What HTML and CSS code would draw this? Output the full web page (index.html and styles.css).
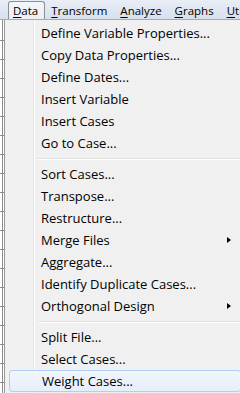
FILE: index.html
```html
<!DOCTYPE html>
<html lang="en">
<head>
    <meta charset="UTF-8">
    <meta name="viewport" content="width=device-width, initial-scale=1.0">
    <title>Data Menu</title>
    <link rel="stylesheet" href="styles.css">
</head>
<body>
    <div class="menubar">
        <span class="top-item active"><u>D</u>ata</span>
        <span class="top-item"><u>T</u>ransform</span>
        <span class="top-item"><u>A</u>nalyze</span>
        <span class="top-item"><u>G</u>raphs</span>
        <span class="top-item"><u>U</u>tilities</span>
    </div>
    <div class="workspace">
        <div class="grid"></div>
        <div class="dropdown">
            <div class="item">Define Variable Properties...</div>
            <div class="item">Copy Data Properties...</div>
            <div class="item">Define Dates...</div>
            <div class="item">Insert Variable</div>
            <div class="item">Insert Cases</div>
            <div class="item">Go to Case...</div>
            <div class="separator"></div>
            <div class="item">Sort Cases...</div>
            <div class="item">Transpose...</div>
            <div class="item">Restructure...</div>
            <div class="item submenu">Merge Files</div>
            <div class="item">Aggregate...</div>
            <div class="item">Identify Duplicate Cases...</div>
            <div class="item submenu">Orthogonal Design</div>
            <div class="separator"></div>
            <div class="item">Split File...</div>
            <div class="item">Select Cases...</div>
            <div class="item hover">Weight Cases...</div>
        </div>
    </div>
</body>
</html>
```
FILE: styles.css
```css
body {
    margin: 0;
    width: 240px;
    height: 393px;
    overflow: hidden;
    font-family: 'Open Sans', 'Noto Sans', sans-serif;
    font-size: 13px;
    color: #000;
    background: #fff;
}
.menubar {
    display: flex;
    align-items: flex-end;
    height: 19px;
    padding-left: 8px;
    overflow: hidden;
    font-size: 11.5px;
    border-bottom: 1px solid #a7abb0;
    background: linear-gradient(#e9eef6, #dfe7f1 50%, #d7e0ec);
    white-space: nowrap;
}
.top-item {
    display: flex;
    align-items: center;
    height: 17px;
    margin-right: 1px;
    padding: 0 6px 0 4px;
    border: 1px solid transparent;
    border-bottom: none;
    line-height: 1;
}
.top-item u {
    text-decoration-thickness: 1px;
    text-underline-offset: 2px;
}
.top-item.active {
    height: 18px;
    margin-bottom: -1px;
    border-color: #8e8f8f;
    border-radius: 3px 3px 0 0;
    background: linear-gradient(#f4f6f9, #eceff3);
}
.workspace {
    display: flex;
    height: 373px;
}
.grid {
    width: 5px;
    flex: none;
    border-right: 1px solid #979797;
    box-sizing: border-box;
    background:
        linear-gradient(90deg, transparent 2px, #8c8c8c 2px, #8c8c8c 3px, transparent 3px),
        repeating-linear-gradient(transparent 0, transparent 18px, #8c8c8c 18px, #8c8c8c 19px);
    background-position: 0 0, 0 2px;
}
.dropdown {
    flex: none;
    width: 240px;
    box-sizing: border-box;
    padding: 2px 4px 0 3px;
    background:
        linear-gradient(90deg, #f1f1f1 28px, #e2e3e3 28px, #e2e3e3 29px, #ffffff 29px, #ffffff 30px, #f0f0f0 30px);
}
.item {
    position: relative;
    height: 22px;
    line-height: 22px;
    padding-left: 33px;
    white-space: nowrap;
    box-sizing: border-box;
}
.item.submenu::after {
    content: "";
    position: absolute;
    left: 219px;
    top: 8px;
    border-left: 4px solid #000;
    border-top: 3.5px solid transparent;
    border-bottom: 3.5px solid transparent;
}
.item.hover {
    margin-left: 1px;
    padding-left: 32px;
    border: 1px solid #aecff6;
    border-radius: 3px;
    line-height: 20px;
    background: linear-gradient(#f2f6fc, #e6eefa);
}
.separator {
    height: 9px;
    margin-left: 30px;
    background: linear-gradient(transparent 4px, #e0e0e0 4px, #e0e0e0 5px, #ffffff 5px, #ffffff 6px, transparent 6px);
}
```
